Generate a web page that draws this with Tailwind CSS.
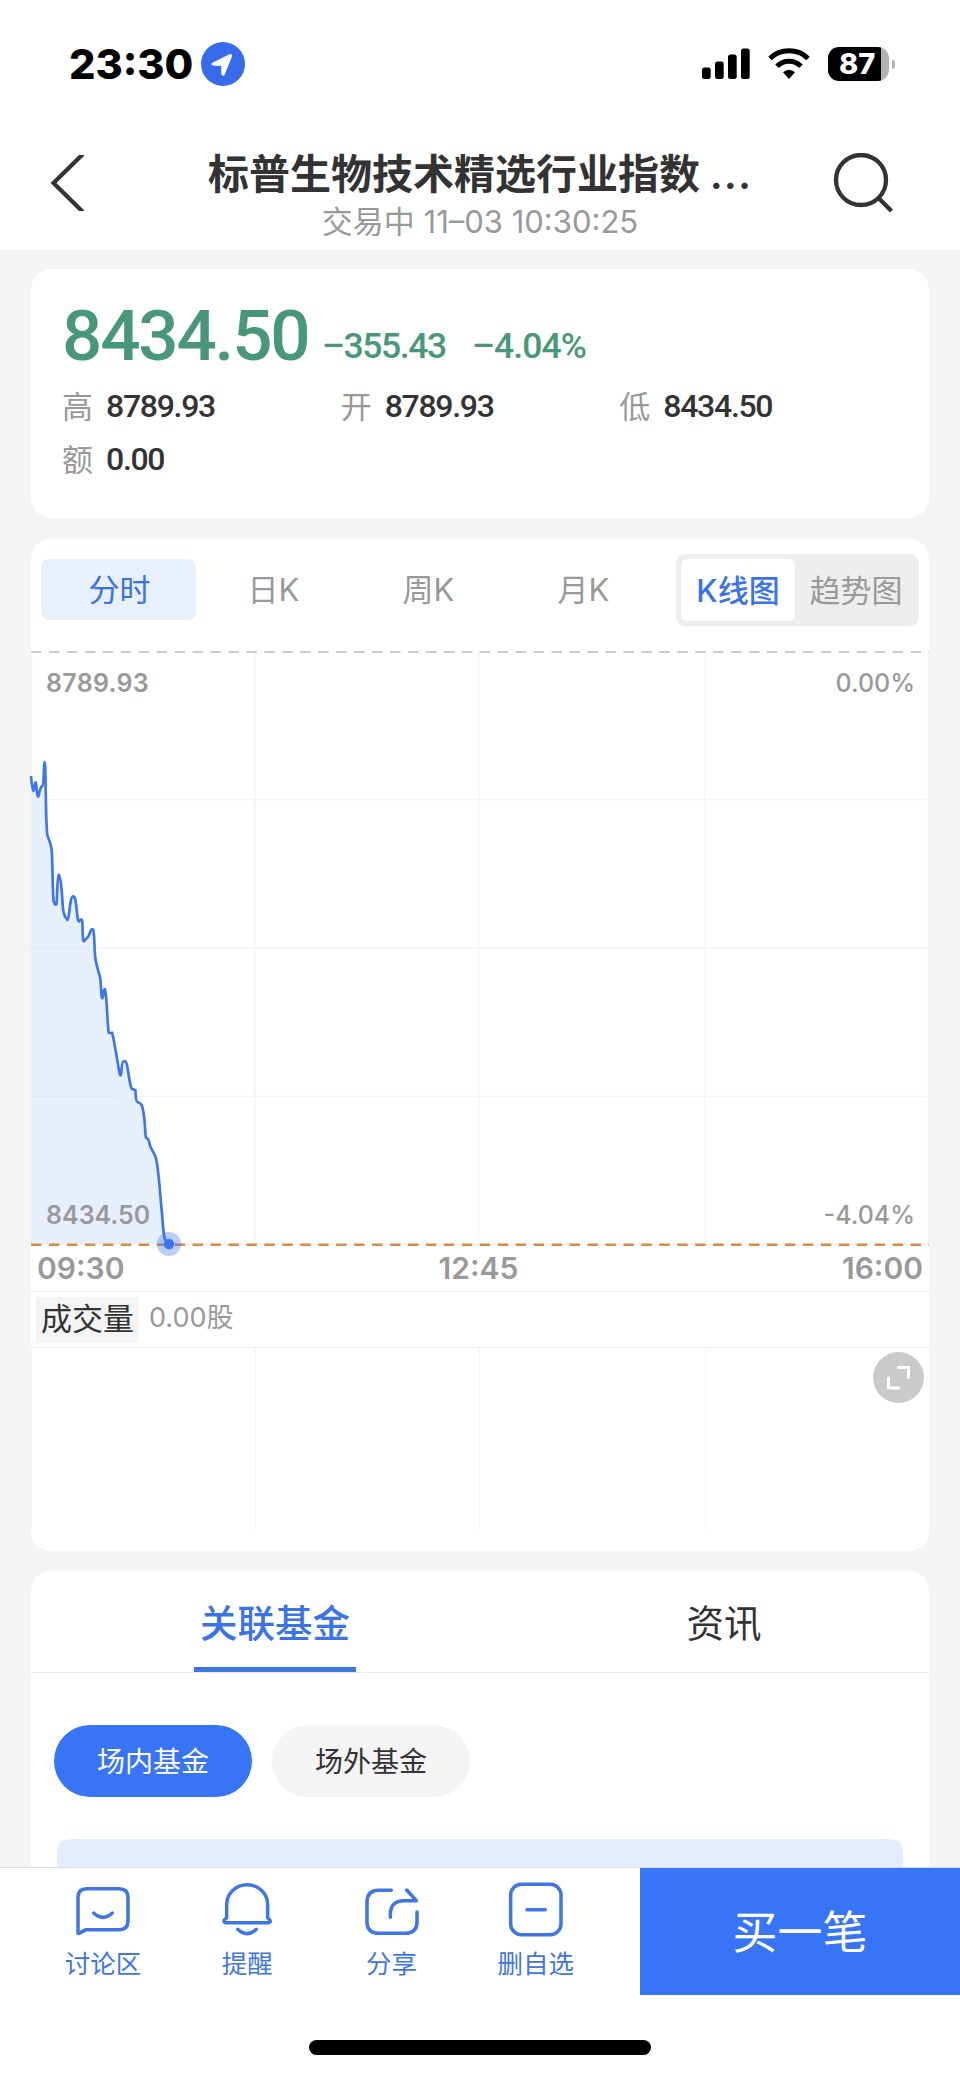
<!DOCTYPE html>
<html lang="zh-CN">
<head>
<meta charset="utf-8">
<title>标普生物技术精选行业指数</title>
<script src="https://cdn.jsdelivr.net/npm/@tailwindcss/browser@4"></script>
</head>
<body class="bg-[#f4f4f4]">
<div class="flex h-[2079px] w-[960px] flex-col overflow-hidden font-['Inter','Noto_Sans_CJK_SC',sans-serif] text-[#333]">

  <!-- status bar -->
  <div class="flex h-[128px] shrink-0 items-center bg-white pl-[69px] text-black">
    <span class="w-[132px] text-[41.500px] leading-[60px] font-extrabold">23:30</span>
    <svg class="size-11" viewBox="0 0 44 44"><circle cx="22" cy="22" r="22" fill="#386bec"/><path d="M11 21.5 29 12.500Q31 12 30.500 14.500L23 33Q21.500 34 20.800 32V23.500L12 23Q10 22.500 11 21.500Z" fill="#fff" stroke="#fff" stroke-width="1" stroke-linejoin="round"/></svg>
    <svg class="ml-[457px] h-8 w-[48px]" viewBox="0 0 48 32"><rect x="0" y="19.500" width="8.700" height="11.500" rx="2.500"/><rect x="13" y="13.500" width="8.700" height="17.500" rx="2.500"/><rect x="26" y="6.500" width="8.700" height="24.500" rx="2.500"/><rect x="39" y="0.500" width="8.700" height="30.500" rx="2.500"/></svg>
    <svg class="ml-[18px] h-8 w-[42px]" viewBox="0 0 42 32" fill="none" stroke="#000" stroke-width="5"><path d="M2 10.500Q9.500 2.800 21 2.800T40 10.500"/><path d="M9 18.300Q14 13.300 21 13.300T33 18.300"/><path d="M15 24.300Q21 19 27 24.300L21 31Z" fill="#000" stroke="none"/></svg>
    <div class="ml-[18px] flex items-center gap-[3px]">
      <div class="flex h-[34px] w-[61px] rounded-[11px] bg-[linear-gradient(90deg,#000_53px,#b3b3b3_53px)] pl-[11px] text-[29px] leading-[34px] font-extrabold text-white">87</div>
      <div class="h-[9px] w-[3px] rounded-r-full bg-[#b3b3b3]"></div>
    </div>
  </div>

  <!-- title bar -->
  <header class="flex h-[122px] shrink-0 bg-white pt-[21px]">
    <svg class="mt-[6px] ml-[50px] h-[56px] w-[34px]" viewBox="50 155 34 56" fill="none" stroke="#333" stroke-width="4.200"><path d="M84 153 53.500 183 84 213"/></svg>
    <div class="ml-[74px] w-[644px] text-center">
      <h1 class="text-[41px] leading-[50px] font-bold whitespace-nowrap">标普生物技术精选行业指数 <span class="font-semibold tracking-[1px]">...</span></h1>
      <p class="text-[31px] leading-[45px] text-[#999]">交易中 11–03 10:30:25</p>
    </div>
    <svg class="mt-[4px] ml-[31px] size-[60px]" viewBox="833 153 60 60" fill="none" stroke="#333" stroke-width="4.300"><circle cx="861" cy="180" r="25"/><path d="M878.500 198 891.500 211"/></svg>
  </header>

  <!-- quote summary -->
  <section class="mx-[31px] mt-[19px] h-[249px] shrink-0 rounded-[20px] bg-white pt-[37px] pl-8">
    <div class="flex h-[74px] font-['Roboto'] leading-[60px] font-medium text-[#489778]">
      <span class="-ml-px w-[260px] text-[71px] tracking-[-2.200px]">8434.50</span>
      <span class="mt-[10px] w-[150px] text-[35.500px] tracking-[-1.400px]">–355.43</span>
      <span class="mt-[10px] text-[35.500px] tracking-[-0.900px]">–4.04%</span>
    </div>
    <dl class="grid w-[836px] grid-cols-3 text-[31px] leading-[53px]">
      <div class="flex gap-3"><dt class="-ml-px text-[#999]">高</dt><dd class="ml-px font-['Roboto'] text-[32px] font-medium tracking-[-1.300px]">8789.93</dd></div>
      <div class="flex gap-3"><dt class="-ml-px text-[#999]">开</dt><dd class="ml-px font-['Roboto'] text-[32px] font-medium tracking-[-1.300px]">8789.93</dd></div>
      <div class="flex gap-3"><dt class="-ml-px text-[#999]">低</dt><dd class="ml-px font-['Roboto'] text-[32px] font-medium tracking-[-1.300px]">8434.50</dd></div>
      <div class="flex gap-3"><dt class="-ml-px text-[#999]">额</dt><dd class="ml-px font-['Roboto'] text-[32px] font-medium tracking-[-1.300px]">0.00</dd></div>
    </dl>
  </section>

  <!-- chart card -->
  <section class="mx-[31px] mt-[21px] flex h-[1012px] shrink-0 flex-col rounded-[20px] bg-white">
    <div class="flex h-[113px] items-start pt-[15px] pl-[10px] text-[31px] text-[#999]">
      <div class="mt-[5px] grid w-[620px] grid-cols-4 text-center leading-[62px]">
        <span class="h-[61px] rounded-lg bg-[#e8f0fd] pl-[2px] text-[#3a72e8]">分时</span><span>日K</span><span>周K</span><span>月K</span>
      </div>
      <div class="ml-[15px] flex h-[72px] w-[243px] rounded-[9px] bg-[#ededed] p-[5px] text-center leading-[63px]">
        <span class="h-[62px] w-[114px] rounded-md bg-white font-medium text-[#3a72e8]">K线图</span><span class="flex-1 pl-[3px]">趋势图</span>
      </div>
    </div>

    <div class="relative h-[593px]">
      <svg class="absolute inset-0 h-[606px] w-[898px] overflow-visible" viewBox="0 0 898 606" fill="none">
        <path stroke="#f3f3f3" stroke-width="1.500" d="M0.500 0V593M224 0V593M447.500 0V593M674.500 0V593M897.500 0V593M0 147.500H898M0 296H898M0 444.500H898M0 592H898"/>
        <path d="M0 0H898" stroke="#cbcbcb" stroke-width="2" stroke-dasharray="10.500 7.450"/>
        <g transform="translate(-11 88) scale(.33333)">
          <path d="M33 108Q37 152 40 153C43 152 43 127 47 127C50 132 50 170 54 170C58 170 57 143 67 138C73 135 70 67 74 66C78 67 76 240 82 285C86 300 92 305 95 330C98 370 98 470 101 484Q108 502 110 488C112 460 112 405 116 404C121 405 124 440 125 450C129 500 127 525 142 540C149 535 149 470 159 469C170 470 167 500 174 540Q177 548 180 541Q186 535 187 545C189 600 188 605 193 603C196 595 205 595 207 585C213 570 212 567 219 568C224 575 222 620 226 655C230 680 234 690 240 710C244 735 243 775 247 775C250 775 249 747 254 747C261 760 261 840 266 878Q271 880 276 878C281 890 286 930 291 955C296 985 299 1007 302 1006C306 1002 303 964 311 964Q318 962 321 975C327 1005 328 1030 335 1046Q342 1049 346 1050C348 1065 346 1085 353 1086C362 1092 366 1090 369 1110C376 1140 374 1175 378 1193Q384 1195 386 1201C392 1235 401 1230 408 1255C418 1300 421 1380 426 1420C431 1490 432 1505 447 1512H33Z" fill="#e7effd"/>
          <path d="M33 108Q37 152 40 153C43 152 43 127 47 127C50 132 50 170 54 170C58 170 57 143 67 138C73 135 70 67 74 66C78 67 76 240 82 285C86 300 92 305 95 330C98 370 98 470 101 484Q108 502 110 488C112 460 112 405 116 404C121 405 124 440 125 450C129 500 127 525 142 540C149 535 149 470 159 469C170 470 167 500 174 540Q177 548 180 541Q186 535 187 545C189 600 188 605 193 603C196 595 205 595 207 585C213 570 212 567 219 568C224 575 222 620 226 655C230 680 234 690 240 710C244 735 243 775 247 775C250 775 249 747 254 747C261 760 261 840 266 878Q271 880 276 878C281 890 286 930 291 955C296 985 299 1007 302 1006C306 1002 303 964 311 964Q318 962 321 975C327 1005 328 1030 335 1046Q342 1049 346 1050C348 1065 346 1085 353 1086C362 1092 366 1090 369 1110C376 1140 374 1175 378 1193Q384 1195 386 1201C392 1235 401 1230 408 1255C418 1300 421 1380 426 1420C431 1490 432 1505 447 1512" stroke="#3c76ea" stroke-width="8" stroke-linejoin="round"/>
        </g>
        <path d="M0 296H59M0 444.500H86" stroke="#e0e7f4" stroke-width="1.500"/>
        <path d="M0 592.800H898" stroke="#d48f45" stroke-width="2.600" stroke-dasharray="10.500 7.450"/>
        <circle cx="138" cy="592" r="12" fill="#3874f6" fill-opacity=".35"/><circle cx="138" cy="592" r="5.200" fill="#3874f6"/>
      </svg>
      <div class="relative flex h-full flex-col justify-between pt-[13px] pr-[14px] pb-3 pl-[15px] text-[25px] leading-[36px] font-semibold text-[#999]">
        <div class="flex justify-between"><span class="tracking-[0.300px]">8789.93</span><span class="font-medium">0.00%</span></div>
        <div class="flex justify-between"><span>8434.50</span><span class="font-medium">-4.04%</span></div>
      </div>
    </div>

    <div class="grid h-[46px] grid-cols-3 px-[6px] text-[30px] leading-[47px] font-semibold text-[#999]">
      <span>09:30</span><span class="pr-[3px] text-center">12:45</span><span class="text-right">16:00</span>
    </div>

    <div class="flex h-[57px] items-start border-y border-[#f2f2f2] pt-[5px] pl-[5px]">
      <span class="h-[46px] w-[103px] bg-[#f4f4f4] text-center text-[31px] leading-[44px]">成交量</span>
      <span class="ml-[10px] text-[27px] leading-[41px] text-[#999]">0.00股</span>
    </div>

    <div class="flex h-[181px]">
      <div class="w-[225px] border-x border-[#f5f5f5]"></div>
      <div class="w-[223.500px] border-r border-[#f5f5f5]"></div>
      <div class="w-[226.500px] border-r border-[#f5f5f5]"></div>
      <div class="flex flex-1 justify-end pt-[4px] pr-[5px]">
        <svg class="size-[51px]" viewBox="0 0 51 51" fill="none" stroke="#fff" stroke-width="3" stroke-linecap="round"><circle cx="25.500" cy="25.500" r="25.500" fill="#cacaca" stroke="none"/><path d="M25.500 15.500H35.500V25.500M15.500 26V36H25.500"/></svg>
      </div>
    </div>
  </section>

  <!-- related funds -->
  <section class="mx-[31px] mt-5 flex h-[296px] shrink-0 flex-col rounded-t-[20px] bg-white">
    <div class="flex h-[102px] border-b border-[#ececec] text-[37.500px] leading-[105px]">
      <div class="flex w-[488px] justify-center"><span class="h-[101px] w-[162px] border-b-5 border-[#4076e0] text-center font-medium text-[#3a72e8]">关联基金</span></div>
      <div class="flex-1 text-center">资讯</div>
    </div>
    <div class="mt-[52px] ml-[23px] flex h-[72px] gap-5 text-center text-[28px] leading-[74px]">
      <span class="w-[198px] rounded-full bg-[#3874f6] text-white">场内基金</span>
      <span class="w-[198px] rounded-full bg-[#f4f4f4]">场外基金</span>
    </div>
    <div class="mx-[26px] mt-[42px] flex-1 rounded-t-xl bg-[#e3edfc]"></div>
  </section>

  <!-- action bar -->
  <nav class="flex h-[128px] shrink-0 border-t border-[#dadde2] bg-white text-[25.500px] text-[#3f76e2]">
    <div class="grid w-[640px] grid-cols-4 pt-[11px] pr-8 pl-[31px] text-center leading-[50px]">
      <div class="flex flex-col items-center"><svg class="h-[60px] w-[66px]" viewBox="210 117 198 180" fill="none" stroke="currentColor" stroke-width="10.500" stroke-linecap="round" stroke-linejoin="round"><path d="M234 279V172Q234 146 260 146H358Q384 146 384 172V243Q384 269 358 269H258L237 280Q234 281 234 279Z"/><path d="M281 219Q309 245 337 219"/></svg><span>讨论区</span></div>
      <div class="flex flex-col items-center"><svg class="h-[60px] w-[66px]" viewBox="642 117 198 180" fill="none" stroke="currentColor" stroke-width="10.500" stroke-linecap="round" stroke-linejoin="round"><path d="M680 233V194A61.500 60 0 0 1 803 194V233L810 241Q813 247 806 248H677Q670 247 673 240Z"/><path d="M713 268Q741 294 769 268"/></svg><span>提醒</span></div>
      <div class="flex flex-col items-center"><svg class="h-[60px] w-[66px]" viewBox="1077 117 198 180" fill="none" stroke="currentColor" stroke-width="10.500" stroke-linecap="round" stroke-linejoin="round"><path d="M1174 151H1137Q1101 151 1101 186V245Q1101 280 1137 280H1215Q1251 280 1251 245V216"/><path d="M1171 232V224Q1171 182 1212 182H1249L1220 150"/></svg><span>分享</span></div>
      <div class="flex flex-col items-center"><svg class="h-[60px] w-[66px]" viewBox="1509 117 198 180" fill="none" stroke="currentColor" stroke-width="10.500" stroke-linecap="round" stroke-linejoin="round"><rect x="1532" y="133" width="151" height="151" rx="32"/><path d="M1581 209H1636"/></svg><span>删自选</span></div>
    </div>
    <div class="w-80 bg-[#3874f6] text-center text-[45px] leading-[129px] text-white">买一笔</div>
  </nav>
  <div class="flex flex-1 justify-center bg-white pt-[45px]"><div class="h-[15px] w-[342px] rounded-full bg-black"></div></div>
</div>
</body>
</html>
